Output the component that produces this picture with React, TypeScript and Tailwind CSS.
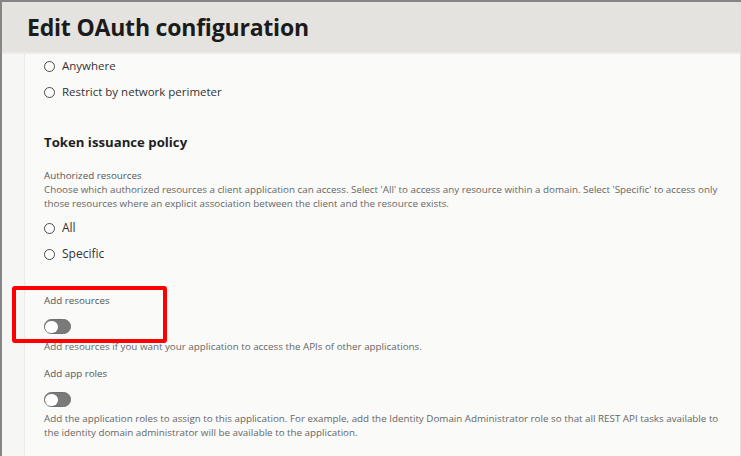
const font = { fontFamily: '"Open Sans", "Noto Sans", sans-serif' };

function Radio({ label, big }: { label: string; big?: boolean }) {
  return (
    <div className="flex h-[20px] items-center">
      <span className="box-border h-[11px] w-[11px] rounded-full border-[1.5px] border-[#4a4a4a] bg-white" />
      <span className={`ml-[7px] text-[#333] ${big ? 'text-[12px]' : 'text-[11.5px]'}`}>{label}</span>
    </div>
  );
}

function Toggle() {
  return (
    <div className="box-border flex h-[15px] w-[27px] items-center rounded-full border-[1.5px] border-[#6e6e6e] bg-[#7a7a7a]">
      <span className="box-border h-[12px] w-[13px] rounded-full bg-white" />
    </div>
  );
}

export default function App() {
  return (
    <div
      className="relative box-border h-[456px] w-[741px] overflow-hidden border-l-2 border-t-2 border-[#858585] bg-[#fafaf9]"
      style={font}
    >
      {/* header */}
      <div className="box-border flex h-[52px] items-center border-b-2 border-[#ecebe8] bg-[#e4e3df] pl-[25px]">
        <h1 className="text-[23px] font-bold tracking-[-0.2px] text-[#1b1b1b]">Edit OAuth configuration</h1>
      </div>

      <div className="flex h-full">
        <div className="w-[23px] shrink-0 border-r border-[#ecebe9] bg-[#f6f6f4]" />

        <div className="flex-1 pl-[19px] pt-[2px] text-[#333]">
          <Radio label="Anywhere" />
          <div className="mt-[6px]">
            <Radio label="Restrict by network perimeter" />
          </div>

          <h2 className="mt-[30px] text-[13.2px] font-bold leading-[20px] text-[#1f1f1f]">Token issuance policy</h2>

          <p className="mt-[17px] text-[9.8px] leading-[14px] text-[#555]">Authorized resources</p>
          <p className="text-[9.8px] leading-[14px] text-[#666]">
            Choose which authorized resources a client application can access. Select 'All' to access any resource within a domain. Select 'Specific' to access only
            <br />
            those resources where an explicit association between the client and the resource exists.
          </p>

          <div className="mt-[7px]">
            <Radio label="All" big />
          </div>
          <div className="mt-[6px]">
            <Radio label="Specific" big />
          </div>

          <p className="mt-[30px] text-[9.8px] leading-[14px] text-[#555]">Add resources</p>
          <div className="mt-[11px]">
            <Toggle />
          </div>
          <p className="mt-[6px] text-[9.8px] leading-[14px] text-[#666]">
            Add resources if you want your application to access the APIs of other applications.
          </p>

          <p className="mt-[13px] text-[9.8px] leading-[14px] text-[#555]">Add app roles</p>
          <div className="mt-[11px]">
            <Toggle />
          </div>
          <p className="mt-[5px] text-[9.8px] leading-[14px] text-[#666]">
            Add the application roles to assign to this application. For example, add the Identity Domain Administrator role so that all REST API tasks available to
            <br />
            the identity domain administrator will be available to the application.
          </p>
        </div>
      </div>

      {/* highlight annotation */}
      <div className="pointer-events-none absolute left-[10px] top-[284px] h-[57px] w-[155px] rounded-[3px] border-[4px] border-[#ff0000]" />

      <div className="absolute right-0 top-0 h-full w-px bg-[#e0e0de]" />
    </div>
  );
}
